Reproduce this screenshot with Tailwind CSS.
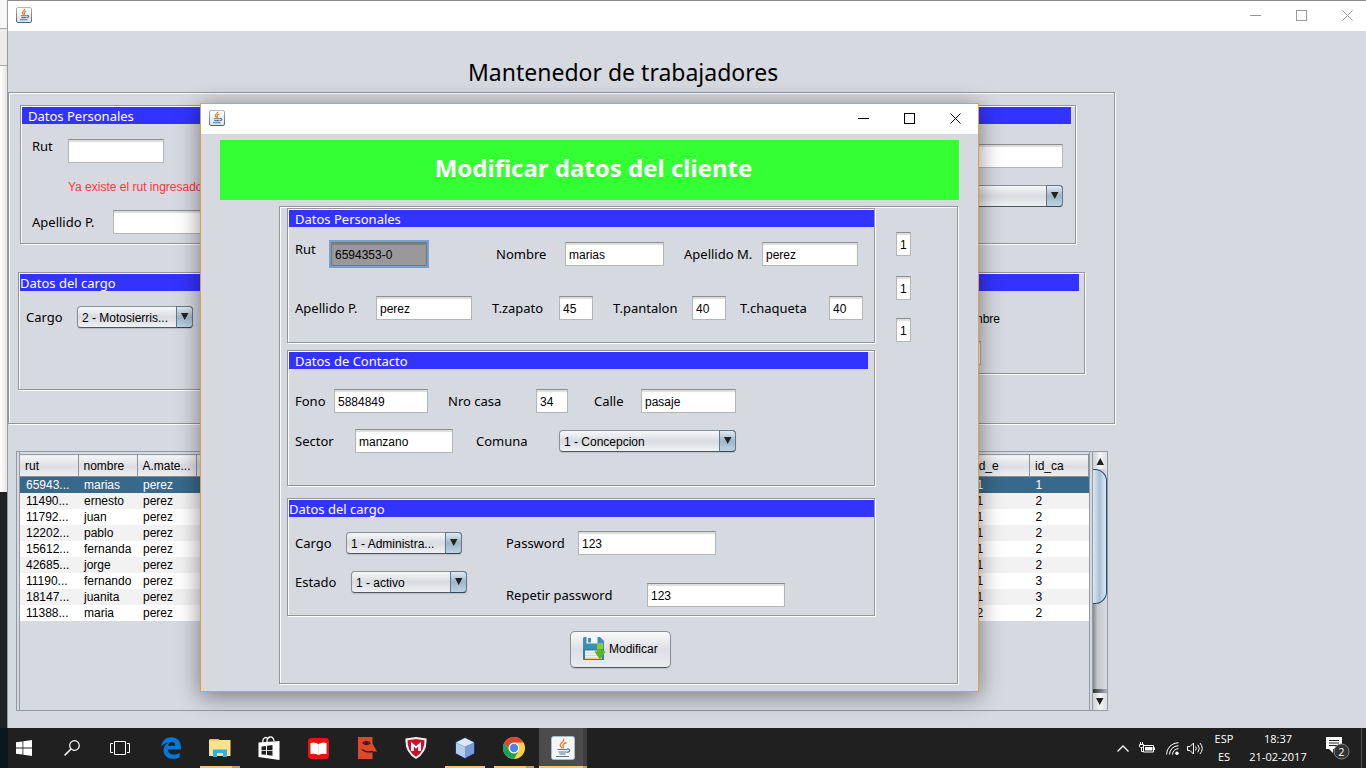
<!DOCTYPE html>
<html lang="es">
<head>
<meta charset="utf-8">
<title>Mantenedor de trabajadores</title>
<script src="https://cdn.jsdelivr.net/npm/@tailwindcss/browser@4"></script>
</head>
<body class="relative h-screen overflow-hidden bg-[#202224] font-['Liberation_Sans',sans-serif] text-[12px] leading-4 text-black">

<svg class="absolute size-0" aria-hidden="true">
  <defs>
    <linearGradient id="javaBorder" x1="0" y1="0" x2="0" y2="1"><stop offset="0" stop-color="#a9b8c4"/><stop offset="1" stop-color="#46647c"/></linearGradient>
    <linearGradient id="javaFill" x1="0" y1="0" x2="0" y2="1"><stop offset="0" stop-color="#ffffff"/><stop offset="1" stop-color="#dfe3e7"/></linearGradient>
    <symbol id="java" viewBox="0 0 16 16">
      <rect x=".5" y=".5" width="15" height="15" rx="1.5" fill="url(#javaFill)" stroke="url(#javaBorder)"/>
      <path d="M8.6 1.8c.9 1.5-2.6 2.4-2.3 4 .1.8.9 1.2 1.1 1.9M10.400 4c-1.600.6-2.500 1.300-2.100 2.200.3.7.4 1-.3 1.700" fill="none" stroke="#e8801f" stroke-width="1.200"/>
      <path d="M4.800 8.800h6M5.300 10.600h5M4 12.700h7.500M11 8.500c2.600-.3 2.300 2-.3 2.300" fill="none" stroke="#4f7894" stroke-width="1.100"/>
    </symbol>
    <symbol id="arrow" viewBox="0 0 8 8"><path d="M0 0h7.500L3.750 7z" fill="#222"/></symbol>
  </defs>
</svg>

<!-- Edge of the window behind -->
<div class="absolute top-0 bottom-10 left-0 flex w-2 flex-col border-r border-[#999] bg-[#202224]" aria-hidden="true">
  <div class="h-7 bg-[#f7f7f7]"></div>
  <div class="h-[38px] border-y border-[#aaa] bg-[#ececec]"></div>
  <div class="h-[426px] bg-linear-to-r from-white to-[#e4e4e4]"></div>
</div>

<!-- Main window -->
<main class="absolute top-0 right-0 bottom-10 left-2 overflow-hidden border-t border-[#8c8c8c] bg-[#d6d9e0]">
  <div class="flex h-[30px] items-center bg-white pb-[2px] pl-2">
    <svg class="size-4"><use href="#java"/></svg>
    <div class="-mr-1 ml-auto flex text-[#999]">
      <button class="flex h-7 w-[46px] items-center justify-center" aria-label="Minimizar"><svg class="size-[11px]" viewBox="0 0 11 11"><path d="M0 5.500h11" stroke="currentColor"/></svg></button>
      <button class="flex h-7 w-[46px] items-center justify-center" aria-label="Maximizar"><svg class="size-[11px]" viewBox="0 0 11 11"><rect x=".5" y=".5" width="10" height="10" fill="none" stroke="currentColor"/></svg></button>
      <button class="flex h-7 w-[46px] items-center justify-center" aria-label="Cerrar"><svg class="size-[11px]" viewBox="0 0 11 11"><path d="M.5.5l10 10M10.500.5l-10 10" stroke="currentColor"/></svg></button>
    </div>
  </div>

  <h1 class="pt-[25px] pb-1 pl-[460px] font-['Noto_Sans',sans-serif] text-[23px] leading-8">Mantenedor de trabajadores</h1>

  <section class="mr-[251px] h-[332px] border border-[#949599] pt-3 pr-[29px] pl-[9px] shadow-[inset_1px_1px_0_#fff,1px_1px_0_#fff]">
    <div class="mr-[9px] ml-[2px] h-[139px] border border-[#949599] shadow-[inset_1px_1px_0_#fff,1px_1px_0_#fff]">
      <h2 class="mt-px mr-1 ml-px h-[17px] bg-[#3333ff] pl-[6px] font-['Noto_Sans',sans-serif] text-[13px] leading-[18px] text-white">Datos Personales</h2>
      <div class="flex justify-between pr-3 pl-[11px]">
        <div class="pt-[15px]">
          <div class="flex">
            <label for="m-rut" class="w-9 font-['Noto_Sans',sans-serif] text-[13px] leading-[14px]">Rut</label>
            <input id="m-rut" class="h-6 w-24 border border-[#b5b5b5] border-t-[#8d8d8d] bg-white px-[3px] pt-[2px] shadow-[inset_0_2px_1px_#ddd]">
          </div>
          <p class="pt-4 pl-9 text-[#ff3344]">Ya existe el rut ingresado</p>
          <div class="flex items-center pt-[15px]">
            <label for="m-app" class="w-[81px] font-['Noto_Sans',sans-serif] text-[13px]">Apellido P.</label>
            <input id="m-app" class="h-6 w-24 border border-[#b5b5b5] border-t-[#8d8d8d] bg-white px-[3px] pt-[2px] shadow-[inset_0_2px_1px_#ddd]">
          </div>
        </div>
        <div class="flex w-[160px] flex-col gap-[17px] pt-5">
          <input aria-label="Apellido M." class="h-6 w-full border border-[#b5b5b5] border-t-[#8d8d8d] bg-white px-[3px] pt-[2px] shadow-[inset_0_2px_1px_#ddd]">
          <div class="relative">
            <select aria-label="Comuna" class="block h-[22px] w-full appearance-none rounded-[4px] border border-[#8b8f96] border-b-[#52565d] bg-linear-to-b from-[#f7f8fa] via-[#d9dbe1] to-[#f0f1f4] pt-[2px] pl-1"><option></option></select>
            <span class="pointer-events-none absolute inset-y-0 right-0 flex w-[17px] items-center justify-center rounded-r-[4px] border border-[#5e7a90] border-b-[#2c475e] bg-linear-to-b from-[#e2ebf1] via-[#9fb5c9] to-[#bcd4e1]"><svg class="size-2"><use href="#arrow"/></svg></span>
          </div>
        </div>
      </div>
    </div>

    <div class="mt-7 flex items-start gap-7">
      <div class="h-[118px] w-[480px] border border-[#949599] shadow-[inset_1px_1px_0_#fff,1px_1px_0_#fff]">
        <h2 class="mt-px ml-px h-[17px] bg-[#3333ff] font-['Noto_Sans',sans-serif] text-[13px] leading-[18px] text-white">Datos del cargo</h2>
        <div class="flex items-center pt-[15px] pl-[7px]">
          <label for="m-cargo" class="w-[51px] font-['Noto_Sans',sans-serif] text-[13px]">Cargo</label>
          <div class="relative">
            <select id="m-cargo" class="block h-[22px] w-[116px] appearance-none rounded-[4px] border border-[#8b8f96] border-b-[#52565d] bg-linear-to-b from-[#f7f8fa] via-[#d9dbe1] to-[#f0f1f4] pt-[2px] pl-1 shadow-[0_1px_1px_#bbbec4]"><option>2 - Motosierris...</option></select>
            <span class="pointer-events-none absolute inset-y-0 right-0 flex w-[17px] items-center justify-center rounded-r-[4px] border border-[#5e7a90] border-b-[#2c475e] bg-linear-to-b from-[#e2ebf1] via-[#9fb5c9] to-[#bcd4e1]"><svg class="size-2"><use href="#arrow"/></svg></span>
          </div>
        </div>
      </div>
      <div class="h-[102px] flex-1 border border-[#949599] shadow-[inset_1px_1px_0_#fff,1px_1px_0_#fff]">
        <div class="mt-px mr-[5px] ml-px h-[17px] bg-[#3333ff]"></div>
        <div class="flex flex-col items-end pr-[84px]">
          <label for="m-nombre" class="pt-5">Nombre</label>
          <input id="m-nombre" class="mt-[14px] mr-[19px] h-6 w-24 border border-[#b5b5b5] border-t-[#8d8d8d] bg-white px-[3px] pt-[2px] shadow-[inset_0_2px_1px_#ddd]">
        </div>
      </div>
    </div>
  </section>

  <section class="mt-[27px] mr-[258px] ml-2 flex h-[260px] border border-[#9499a3] pl-[2px]">
    <div class="flex-1 border-x border-[#9499a3] pt-[2px]">
      <table class="w-full table-fixed border-collapse text-left">
        <colgroup><col class="w-[58px]"><col class="w-[59px]"><col class="w-[59px]"><col><col class="w-[59px]"><col class="w-[59px]"></colgroup>
        <thead>
          <tr class="h-[22px] border-t border-b border-t-[#9499a3] border-b-[#8a8d93] bg-linear-to-b from-[#f4f5f7] via-[#dcdee3] to-[#eceef1]">
            <th class="border-r border-[#8f9299] pl-[5px] font-normal">rut</th><th class="border-r border-[#8f9299] pl-[5px] font-normal">nombre</th><th class="border-r border-[#8f9299] pl-[5px] font-normal whitespace-nowrap">A.mate...</th><th class="border-r border-[#8f9299]"></th><th class="border-r border-[#8f9299] pl-[5px] font-normal">id_e</th><th class="border-r border-[#8f9299] pl-[5px] font-normal">id_ca</th>
          </tr>
        </thead>
        <tbody class="[&_td]:h-4 [&_td]:p-0 [&_td]:pl-[6px] [&_td]:leading-4">
          <tr class="bg-[#39698a] text-white"><td>65943...</td><td>marias</td><td>perez</td><td></td><td>1</td><td>1</td></tr>
          <tr class="bg-[#f2f2f2]"><td>11490...</td><td>ernesto</td><td>perez</td><td></td><td>1</td><td>2</td></tr>
          <tr class="bg-white"><td>11792...</td><td>juan</td><td>perez</td><td></td><td>1</td><td>2</td></tr>
          <tr class="bg-[#f2f2f2]"><td>12202...</td><td>pablo</td><td>perez</td><td></td><td>1</td><td>2</td></tr>
          <tr class="bg-white"><td>15612...</td><td>fernanda</td><td>perez</td><td></td><td>1</td><td>2</td></tr>
          <tr class="bg-[#f2f2f2]"><td>42685...</td><td>jorge</td><td>perez</td><td></td><td>1</td><td>2</td></tr>
          <tr class="bg-white"><td>11190...</td><td>fernando</td><td>perez</td><td></td><td>1</td><td>3</td></tr>
          <tr class="bg-[#f2f2f2]"><td>18147...</td><td>juanita</td><td>perez</td><td></td><td>1</td><td>3</td></tr>
          <tr class="bg-white"><td>11388...</td><td>maria</td><td>perez</td><td></td><td>2</td><td>2</td></tr>
        </tbody>
      </table>
    </div>
    <div class="ml-[2px] flex w-[15px] flex-col border-l border-[#9499a3] bg-linear-to-r from-[#85878b] via-[#c4c6cb] via-30% to-[#dcdee2]">
      <button class="flex h-[17px] items-center justify-center bg-linear-to-r from-[#cfd1d5] via-[#f3f4f6] to-[#dcdee2]" aria-label="Subir"><svg class="size-2 rotate-180"><use href="#arrow"/></svg></button>
      <div class="h-[135px] rounded-r-[12px] border border-l-0 border-[#2c475e] bg-linear-to-r from-[#dfe9f0] via-[#a9c0d4] to-[#d9eefa]"></div>
      <div class="flex-1"></div>
      <div class="h-1 bg-linear-to-r from-[#333] to-[#b5b7bb]"></div>
      <button class="flex h-[17px] items-center justify-center bg-linear-to-r from-[#cfd1d5] via-[#f3f4f6] to-[#dcdee2]" aria-label="Bajar"><svg class="size-2"><use href="#arrow"/></svg></button>
    </div>
  </section>
</main>

<!-- Dialog -->
<div role="dialog" aria-labelledby="dlg-title" class="absolute top-[103px] left-[200px] w-[779px] border border-[#e0a04a] bg-[#d6d9e0] pb-[7px] shadow-[0_4px_22px_rgba(0,0,0,0.45)]">
  <div class="flex h-[30px] items-center bg-white pb-[2px] pl-2">
    <svg class="size-4"><use href="#java"/></svg>
    <div class="ml-auto flex">
      <button class="flex h-7 w-[46px] items-center justify-center" aria-label="Minimizar"><svg class="size-[11px]" viewBox="0 0 11 11"><path d="M0 5.500h11" stroke="currentColor"/></svg></button>
      <button class="flex h-7 w-[46px] items-center justify-center" aria-label="Maximizar"><svg class="size-[11px]" viewBox="0 0 11 11"><rect x=".5" y=".5" width="10" height="10" fill="none" stroke="currentColor"/></svg></button>
      <button class="flex h-7 w-[46px] items-center justify-center" aria-label="Cerrar"><svg class="size-[11px]" viewBox="0 0 11 11"><path d="M.5.5l10 10M10.500.5l-10 10" stroke="currentColor"/></svg></button>
    </div>
  </div>
  <h2 id="dlg-title" class="mx-[19px] mt-[6px] h-[60px] bg-[#33ff33] pl-2 text-center font-['Noto_Sans',sans-serif] text-[24px] leading-[56px] font-bold text-white">Modificar datos del cliente</h2>

  <form class="mt-[6px] mr-5 ml-[78px] flex gap-[21px] border border-[#949599] pt-px pb-[15px] pl-[7px] shadow-[inset_1px_1px_0_#fff,1px_1px_0_#fff]">
    <div class="w-[588px]">
      <div class="border border-[#949599] pb-[22px] shadow-[inset_1px_1px_0_#fff,1px_1px_0_#fff]">
        <h3 class="mt-px ml-px h-[17px] bg-[#3333ff] pl-[6px] font-['Noto_Sans',sans-serif] text-[13px] leading-[18px] text-white">Datos Personales</h3>
        <div class="mt-[15px] flex items-center pl-[7px]">
          <label for="rut" class="w-9 self-start font-['Noto_Sans',sans-serif] text-[13px] leading-[14px]">Rut</label>
          <input id="rut" readonly value="6594353-0" class="h-6 w-24 border border-[#777] bg-[#999] px-[3px] pt-[2px] shadow-[inset_0_2px_1px_#808080,0_0_0_2px_#74a1cf]">
          <label for="nombre" class="ml-[69px] w-[69px] font-['Noto_Sans',sans-serif] text-[13px]">Nombre</label>
          <input id="nombre" value="marias" class="h-6 w-[99px] border border-[#b5b5b5] border-t-[#8d8d8d] bg-white px-[3px] pt-[2px] shadow-[inset_0_2px_1px_#ddd]">
          <label for="apm" class="ml-5 w-[78px] font-['Noto_Sans',sans-serif] text-[13px]">Apellido M.</label>
          <input id="apm" value="perez" class="h-6 w-24 border border-[#b5b5b5] border-t-[#8d8d8d] bg-white px-[3px] pt-[2px] shadow-[inset_0_2px_1px_#ddd]">
        </div>
        <div class="mt-[30px] flex items-center pl-[7px]">
          <label for="app" class="w-[81px] font-['Noto_Sans',sans-serif] text-[13px]">Apellido P.</label>
          <input id="app" value="perez" class="h-6 w-24 border border-[#b5b5b5] border-t-[#8d8d8d] bg-white px-[3px] pt-[2px] shadow-[inset_0_2px_1px_#ddd]">
          <label for="zapato" class="ml-5 w-[67px] font-['Noto_Sans',sans-serif] text-[13px]">T.zapato</label>
          <input id="zapato" value="45" class="h-6 w-[34px] border border-[#b5b5b5] border-t-[#8d8d8d] bg-white px-[3px] pt-[2px] shadow-[inset_0_2px_1px_#ddd]">
          <label for="pantalon" class="ml-5 w-[79px] font-['Noto_Sans',sans-serif] text-[13px]">T.pantalon</label>
          <input id="pantalon" value="40" class="h-6 w-[34px] border border-[#b5b5b5] border-t-[#8d8d8d] bg-white px-[3px] pt-[2px] shadow-[inset_0_2px_1px_#ddd]">
          <label for="chaqueta" class="ml-[14px] w-[89px] font-['Noto_Sans',sans-serif] text-[13px]">T.chaqueta</label>
          <input id="chaqueta" value="40" class="h-6 w-[34px] border border-[#b5b5b5] border-t-[#8d8d8d] bg-white px-[3px] pt-[2px] shadow-[inset_0_2px_1px_#ddd]">
        </div>
      </div>

      <div class="mt-[7px] border border-[#949599] pb-8 shadow-[inset_1px_1px_0_#fff,1px_1px_0_#fff]">
        <h3 class="mt-px mr-[6px] ml-px h-[17px] bg-[#3333ff] pl-[6px] font-['Noto_Sans',sans-serif] text-[13px] leading-[18px] text-white">Datos de Contacto</h3>
        <div class="mt-5 flex items-center pl-[7px]">
          <label for="fono" class="w-[39px] font-['Noto_Sans',sans-serif] text-[13px]">Fono</label>
          <input id="fono" value="5884849" class="h-6 w-[94px] border border-[#b5b5b5] border-t-[#8d8d8d] bg-white px-[3px] pt-[2px] shadow-[inset_0_2px_1px_#ddd]">
          <label for="casa" class="ml-5 w-[88px] font-['Noto_Sans',sans-serif] text-[13px]">Nro casa</label>
          <input id="casa" value="34" class="h-6 w-8 border border-[#b5b5b5] border-t-[#8d8d8d] bg-white px-[3px] pt-[2px] shadow-[inset_0_2px_1px_#ddd]">
          <label for="calle" class="ml-[26px] w-[47px] font-['Noto_Sans',sans-serif] text-[13px]">Calle</label>
          <input id="calle" value="pasaje" class="h-6 w-[95px] border border-[#b5b5b5] border-t-[#8d8d8d] bg-white px-[3px] pt-[2px] shadow-[inset_0_2px_1px_#ddd]">
        </div>
        <div class="mt-4 flex items-center pl-[7px]">
          <label for="sector" class="w-[60px] font-['Noto_Sans',sans-serif] text-[13px]">Sector</label>
          <input id="sector" value="manzano" class="h-6 w-[98px] border border-[#b5b5b5] border-t-[#8d8d8d] bg-white px-[3px] pt-[2px] shadow-[inset_0_2px_1px_#ddd]">
          <label for="comuna" class="ml-[23px] w-[83px] font-['Noto_Sans',sans-serif] text-[13px]">Comuna</label>
          <div class="relative">
            <select id="comuna" class="block h-[22px] w-[177px] appearance-none rounded-[4px] border border-[#8b8f96] border-b-[#52565d] bg-linear-to-b from-[#f7f8fa] via-[#d9dbe1] to-[#f0f1f4] pt-[2px] pl-1 shadow-[0_1px_1px_#bbbec4]"><option>1 - Concepcion</option></select>
            <span class="pointer-events-none absolute inset-y-0 right-0 flex w-[17px] items-center justify-center rounded-r-[4px] border border-[#5e7a90] border-b-[#2c475e] bg-linear-to-b from-[#e2ebf1] via-[#9fb5c9] to-[#bcd4e1]"><svg class="size-2"><use href="#arrow"/></svg></span>
          </div>
        </div>
      </div>

      <div class="mt-3 border border-[#949599] pb-2 shadow-[inset_1px_1px_0_#fff,1px_1px_0_#fff]">
        <h3 class="mt-px ml-px h-[17px] bg-[#3333ff] font-['Noto_Sans',sans-serif] text-[13px] leading-[18px] text-white">Datos del cargo</h3>
        <div class="flex pl-[7px]">
          <div class="flex w-[211px] flex-col gap-[17px] pt-[15px]">
            <div class="flex items-center">
              <label for="cargo" class="w-[51px] font-['Noto_Sans',sans-serif] text-[13px]">Cargo</label>
              <div class="relative">
                <select id="cargo" class="block h-[22px] w-[116px] appearance-none rounded-[4px] border border-[#8b8f96] border-b-[#52565d] bg-linear-to-b from-[#f7f8fa] via-[#d9dbe1] to-[#f0f1f4] pt-[2px] pl-1 shadow-[0_1px_1px_#bbbec4]"><option>1 - Administra...</option></select>
                <span class="pointer-events-none absolute inset-y-0 right-0 flex w-[17px] items-center justify-center rounded-r-[4px] border border-[#5e7a90] border-b-[#2c475e] bg-linear-to-b from-[#e2ebf1] via-[#9fb5c9] to-[#bcd4e1]"><svg class="size-2"><use href="#arrow"/></svg></span>
              </div>
            </div>
            <div class="flex items-center">
              <label for="estado" class="w-14 font-['Noto_Sans',sans-serif] text-[13px]">Estado</label>
              <div class="relative">
                <select id="estado" class="block h-[22px] w-[116px] appearance-none rounded-[4px] border border-[#8b8f96] border-b-[#52565d] bg-linear-to-b from-[#f7f8fa] via-[#d9dbe1] to-[#f0f1f4] pt-[2px] pl-1 shadow-[0_1px_1px_#bbbec4]"><option>1 - activo</option></select>
                <span class="pointer-events-none absolute inset-y-0 right-0 flex w-[17px] items-center justify-center rounded-r-[4px] border border-[#5e7a90] border-b-[#2c475e] bg-linear-to-b from-[#e2ebf1] via-[#9fb5c9] to-[#bcd4e1]"><svg class="size-2"><use href="#arrow"/></svg></span>
              </div>
            </div>
          </div>
          <div class="flex flex-col gap-7 pt-[14px]">
            <div class="flex items-center">
              <label for="pass" class="w-[72px] font-['Noto_Sans',sans-serif] text-[13px]">Password</label>
              <input id="pass" value="123" class="h-6 w-[138px] border border-[#b5b5b5] border-t-[#8d8d8d] bg-white px-[3px] pt-[2px] shadow-[inset_0_2px_1px_#ddd]">
            </div>
            <div class="flex items-center">
              <label for="pass2" class="w-[141px] font-['Noto_Sans',sans-serif] text-[13px]">Repetir password</label>
              <input id="pass2" value="123" class="h-6 w-[138px] border border-[#b5b5b5] border-t-[#8d8d8d] bg-white px-[3px] pt-[2px] shadow-[inset_0_2px_1px_#ddd]">
            </div>
          </div>
        </div>
      </div>

      <button type="button" class="mt-[15px] ml-[283px] flex h-[37px] w-[101px] items-center gap-[3px] rounded-[5px] border border-[#8b8f96] border-b-[#52565d] bg-linear-to-b from-[#f9fafb] via-[#dddfe4] to-[#e9ebef] pb-px pl-[11px] shadow-[0_1px_1px_#bbbec4]">
        <svg class="size-6" viewBox="0 0 24 24">
          <path d="M1 1.500Q1 0 2.500 0H18l4 4v18q0 1-1 1H2.500Q1 23 1 21.500z" fill="#3d8fb5"/>
          <path d="M1 12h21v10q0 1-1 1H2.500Q1 23 1 21.500z" fill="#2f7ea6"/>
          <path d="M4.500 0h11v6.500h-11z" fill="#f4f7f8"/><path d="M6 1h3v4.500H6z" fill="#3d8fb5"/>
          <path d="M3 13.500h17V22H3z" fill="#f2f3f4"/><path d="M3 16h17M3 18.500h17" stroke="#d5d8da"/>
          <path d="M3 20.500h17V22H3z" fill="#f3cf8e"/>
          <path d="M15 6h6v8.500h2.500L18 22.500l-5.500-8H15z" fill="#86d11e"/><path d="M15 12h6v2.500h2.500L18 22.500l-5.500-8H15z" fill="#5eb32a"/>
        </svg>
        Modificar
      </button>
    </div>

    <div class="flex flex-col gap-[18px] pt-6">
      <input aria-label="Estado 1" value="1" class="mb-[2px] h-6 w-[15px] border border-[#b5b5b5] border-t-[#8d8d8d] bg-white px-[3px] pt-[2px] shadow-[inset_0_2px_1px_#ddd]">
      <input aria-label="Estado 2" value="1" class="h-6 w-[15px] border border-[#b5b5b5] border-t-[#8d8d8d] bg-white px-[3px] pt-[2px] shadow-[inset_0_2px_1px_#ddd]">
      <input aria-label="Estado 3" value="1" class="h-6 w-[15px] border border-[#b5b5b5] border-t-[#8d8d8d] bg-white px-[3px] pt-[2px] shadow-[inset_0_2px_1px_#ddd]">
    </div>
  </form>
</div>

<!-- Taskbar -->
<footer class="absolute inset-x-0 bottom-0 flex h-10 border-l-8 border-[#0a181e] bg-[#202020] font-['Open_Sans',sans-serif] text-[11px] text-white">
  <button class="flex w-8 items-center justify-center" aria-label="Inicio"><svg class="size-4" viewBox="0 0 16 16"><path d="M0 2.300l6.500-.9v6.100H0zM7.300 1.300L16 0v7.500H7.300zM0 8.400h6.500v6.200L0 13.700zM7.300 8.400H16V16l-8.700-1.200z" fill="#fff"/></svg></button>
  <button class="ml-2 flex w-12 items-center justify-center" aria-label="Buscar"><svg class="size-4" viewBox="0 0 16 16" fill="none" stroke="#fff"><circle cx="10.500" cy="5.500" r="4.800" stroke-width="1.200"/><path d="M7 9L.6 15.400" stroke-width="1.500"/></svg></button>
  <button class="flex w-12 items-center justify-center" aria-label="Vista de tareas"><svg class="h-4 w-5" viewBox="0 0 20 16" fill="none" stroke="#fff"><path d="M4.500 1.500h11v13h-11zM3 3.500H.5v9H3M17 3.500h2.500v9H17"/></svg></button>
  <div class="ml-[3px] flex gap-px">
    <button class="flex w-12 items-center justify-center" aria-label="Edge"><svg class="h-[22px] w-5" viewBox="0 0 20 22"><path d="M.2 9.700C.9 3.500 5 .3 10.300.3c6 0 9.700 4.200 9.700 10v2.300H6.800c.2 3.300 2.900 5 6.200 5 2.100 0 3.900-.5 5.700-1.600v4.300c-1.900 1-4.200 1.500-6.800 1.500C6.400 21.800 2.500 18.500 2.500 13.200c0-3.200 1.700-5.900 5-7.500C4.600 5.700 2 7 .2 9.700zM7 8.800h7.200c0-2.400-1.200-3.900-3.400-3.900C8.700 4.900 7.400 6.500 7 8.800z" fill="#0078d7"/></svg></button>
    <button class="relative flex w-12 items-center justify-center" aria-label="Explorador"><svg class="h-[18px] w-[22px]" viewBox="0 0 22 18"><path d="M1 0h8l1.500 1H21.500v16H0V1z" fill="#fce28d"/><path d="M1 0h8l1 1.500H1z" fill="#eebb3b"/><path d="M4 18v-7.500h14V18h-4v-4H8v4z" fill="#35aee2"/></svg><span class="absolute bottom-0 left-1 h-[2px] w-10 border-r-8 border-[#c49a66] bg-[#ffc078]"></span></button>
    <button class="flex w-12 items-center justify-center" aria-label="Tienda"><svg class="h-6 w-[22px]" viewBox="0 0 22 24"><path d="M5 7C4 2 8 0 10 3M9 6c0-6 6-7 7-1" fill="none" stroke="#fff" stroke-width="1.300"/><path d="M.5 6.500L21.500 5v19L.5 21z" fill="#fff"/><path d="M3.500 10.500l4.500-.6v4H3.500zM9 9.800l5.500-.8v4.900H9zM3.500 14.800H8v4l-4.500-.4zM9 14.800h5.500v4.900L9 19z" fill="#202020"/></svg></button>
    <button class="flex w-12 items-center justify-center" aria-label="Lector"><svg class="size-[21px]" viewBox="0 0 21 21"><rect width="21" height="21" rx="3.500" fill="#e2150f"/><path d="M2.500 5q4-1.500 8 1 4-2.500 8-1v11q-4-1-8 1-4-2-8-1z" fill="#fff"/><path d="M10.500 6v11" stroke="#ccc" stroke-width=".6"/></svg></button>
    <button class="flex w-12 items-center justify-center" aria-label="Notas"><svg class="h-[22px] w-5" viewBox="0 0 20 22"><path d="M1 0h14.500v6.500L20 14.500h-4.500V22H1z" fill="#e0482a"/><path d="M6 6q3.500-3.500 7 0-3.500 3.200-7 0z" fill="none" stroke="#2a211e" stroke-width="1.100"/><circle cx="9.500" cy="6" r="1.600" fill="#2a211e"/><path d="M5 12.500q4 3.500 11 2" fill="none" stroke="#2a211e" stroke-width="1.400"/></svg></button>
    <button class="flex w-12 items-center justify-center" aria-label="McAfee"><svg class="h-[22px] w-[22px]" viewBox="0 0 22 22"><path d="M11 0l10.500 1.500q1 14-10.500 20.500Q-.5 15.500.5 1.500z" fill="#f3f3f3"/><path d="M11 2l8.500 1.200Q19.800 14 11 19.700 2.200 14 2.500 3.200z" fill="#c8102e"/><path d="M6 14V5l5 4 5-4v9h-2.800V9.500L11 11.700 8.800 9.500V14z" fill="#fff"/></svg></button>
    <button class="relative flex w-12 items-center justify-center" aria-label="NetBeans"><svg class="h-[22px] w-5" viewBox="0 0 20 22"><path d="M10 .5l9.500 4.700v11.300L10 21.500.5 16.500V5.200z" fill="#5a7ec4" stroke="#1a2a78" stroke-width=".8"/><path d="M10 1l9 4.400-9 4.400-9-4.400z" fill="#dbeaf0"/><path d="M1 6l9 4v11l-9-4.700z" fill="#b4cdee"/><path d="M19 6l-9 4v11l9-4.700z" fill="#7b9bd3"/></svg><span class="absolute bottom-0 left-1 h-[2px] w-10 bg-[#ffc078]"></span></button>
    <button class="relative flex w-12 items-center justify-center" aria-label="Chrome"><svg class="size-[22px]" viewBox="0 0 22 22"><circle cx="11" cy="11" r="11" fill="#fdd23e"/><path d="M1.470 5.500A11 11 0 0 1 20.530 5.500H11A5.500 5.500 0 0 0 6.240 13.750z" fill="#db4437"/><path d="M1.470 5.500A11 11 0 0 0 11 22l4.760-8.250a5.500 5.500 0 0 1-9.520 0z" fill="#1da05a"/><circle cx="11" cy="11" r="5.200" fill="#fff"/><circle cx="11" cy="11" r="4.200" fill="#4a86f0"/></svg><span class="absolute bottom-0 left-1 h-[2px] w-10 border-r-8 border-[#c49a66] bg-[#ffc078]"></span></button>
    <button class="relative flex w-12 items-center justify-center border-r-4 border-[#3d3f3f] bg-[#4c4c4c] pl-1" aria-label="Java"><svg class="size-6" viewBox="0 0 24 24"><rect x=".5" y=".5" width="23" height="23" rx="2" fill="#f3f5f7" stroke="#a9bccb"/><path d="M12.500 3c1.600 2.500-3.800 3.700-3.300 6.300.2 1.200 1.500 1.900 1.700 3M15.500 6.500c-2.500.9-4 2-3.400 3.400.4 1 .6 1.500-.2 2.500" fill="none" stroke="#ea7d22" stroke-width="1.400"/><path d="M6.500 13.500h10M7.500 16h8M8.500 18h6M5 20.500h13M16 13c3.800-.6 3.300 3-.3 3.300" fill="none" stroke="#55788f" stroke-width="1.200"/></svg><span class="absolute inset-x-0 -right-1 bottom-0 h-[2px] border-r-4 border-[#c49a66] bg-[#ffc078]"></span></button>
  </div>
  <div class="ml-auto flex items-center">
    <button aria-label="Iconos ocultos"><svg class="h-[7px] w-3" viewBox="0 0 12 7"><path d="M.5 6.500L6 1l5.500 5.500" fill="none" stroke="#fff" stroke-width="1.300"/></svg></button>
    <svg class="ml-[10px] h-3 w-4" viewBox="0 0 16 12" fill="none" stroke="#fff"><path d="M4.500 3.500h10v6.500H4.500zM15.500 5.500v2.500" /><path d="M6 5h7.500v3.500H6z" fill="#fff" stroke="none"/><path d="M.5 2.500h4v2L3.500 5.500h-2L.5 4.500zM1.500 2.500V0M3.500 2.500V0M2.500 6v3.500h2"/></svg>
    <svg class="ml-[11px] size-[13px]" viewBox="0 0 13 13" fill="none" stroke="#fff"><path d="M.5 12.500A12 12 0 0 1 12.500.7M3.500 12.500a9 9 0 0 1 9-8.800M6.500 12.500a6 6 0 0 1 6-5.800"/><circle cx="11" cy="11.300" r="1.700" fill="#fff" stroke="none"/></svg>
    <svg class="ml-2 h-[13px] w-[17px]" viewBox="0 0 17 13" fill="none" stroke="#fff"><path d="M.5 4.500H3L6.500 1v11L3 8.500H.5zM8.500 4.500q1.500 2 0 4M10.800 2.700q3 3.800 0 7.600M13 1q4.500 5.500 0 11"/></svg>
    <div class="ml-2 w-6 text-center leading-[18px]">ESP<br>ES</div>
    <div class="ml-[9px] w-[66px] text-center leading-[18px] whitespace-nowrap">18:37<br>21-02-2017</div>
    <button class="mr-[11px] ml-[15px] flex" aria-label="2 notificaciones"><svg class="h-6 w-6" viewBox="0 0 24 24"><path d="M0 1h16v12H7v4l-4-4H0z" fill="#fff"/><path d="M3 4.500h10M3 7h10M3 9.500h10" stroke="#202020"/><circle cx="15.500" cy="15.500" r="7.500" fill="#333" stroke="#888"/><text x="15.500" y="19.500" text-anchor="middle" font-size="11" fill="#fff">2</text></svg></button>
  </div>
  <div class="mr-1 w-px bg-[#555]"></div>
</footer>
</body>
</html>
